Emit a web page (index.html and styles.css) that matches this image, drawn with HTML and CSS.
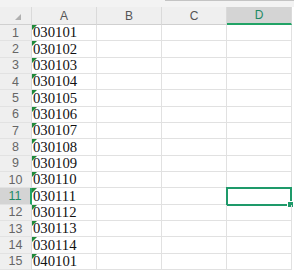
FILE: index.html
```html
<!DOCTYPE html>
<html lang="en">
<head>
  <meta charset="UTF-8">
  <title>Sheet</title>
  <link rel="stylesheet" href="styles.css">
</head>
<body>
  <div class="formula-edge"><span class="edge-line"></span></div>
  <div class="sheet" id="sheet">
    <div class="corner"><span class="corner-tri"></span></div>
    <div class="col-head">A</div>
    <div class="col-head">B</div>
    <div class="col-head">C</div>
    <div class="col-head active">D</div>
  </div>

  <script>
    const sheet = document.getElementById('sheet');
    const codes = ['030101', '030102', '030103', '030104', '030105', '030106', '030107',
      '030108', '030109', '030110', '030111', '030112', '030113', '030114', '040101'];

    codes.forEach((code, i) => {
      const row = i + 1;
      const sel = row === 11;
      let html = `<div class="row-head${sel ? ' active' : ''}">${row}</div>`;
      html += `<div class="cell text"><span class="flag"></span>${code}</div>`;
      html += '<div class="cell"></div><div class="cell"></div>';
      html += `<div class="cell${sel ? ' selected' : ''}"></div>`;
      sheet.insertAdjacentHTML('beforeend', html);
    });
  </script>
</body>
</html>
```

FILE: styles.css
```css
body {
  margin: 0;
  background: #fff;
  overflow: hidden;
  font-family: "Liberation Sans", Arial, sans-serif;
}

.formula-edge {
  height: 7px;
  background: #f3f3f3;
  position: relative;
}

.edge-line {
  position: absolute;
  left: 165px;
  right: 0;
  top: 0;
  height: 1px;
  background: #c4c4c4;
}

.sheet {
  display: grid;
  grid-template-columns: 32px 65px 65px 65px 65px;
  grid-template-rows: 18px repeat(15, 16.33px);
}

.corner, .col-head, .row-head {
  background: #efefef;
  color: #555;
  box-sizing: border-box;
  border-right: 1px solid #dadada;
  border-bottom: 1px solid #d0d0d0;
  display: flex;
  align-items: center;
  justify-content: center;
}

.corner {
  position: relative;
}

.corner-tri {
  position: absolute;
  right: 10px;
  bottom: 4px;
  width: 0;
  height: 0;
  border-left: 6px solid transparent;
  border-bottom: 6px solid #b0b0b0;
}

.col-head {
  font-size: 12px;
  color: #555;
}

.col-head.active {
  background: #d4d4d4;
  color: #1f8a64;
  border-bottom: 2px solid #21a366;
}

.row-head {
  font-size: 12.5px;
  color: #666;
  border-bottom-color: #e2e2e2;
}

.row-head.active {
  background: #d4d4d4;
  color: #1f8a64;
  border-right: 2px solid #21a366;
}

.cell {
  box-sizing: border-box;
  border-right: 1px solid #e1e1e1;
  border-bottom: 1px solid #e1e1e1;
  position: relative;
}

.cell.text {
  font-family: "Liberation Serif", "Times New Roman", serif;
  font-size: 14.7px;
  color: #111;
  line-height: 16px;
  padding-left: 1px;
  display: flex;
  align-items: flex-end;
}

.flag {
  position: absolute;
  left: 0;
  top: 0;
  width: 0;
  height: 0;
  border-top: 5px solid #1e8a3a;
  border-right: 5px solid transparent;
}

.cell.selected {
  border: 2px solid #1e9a6a;
  margin: -1px 0 -1px -1px;
  position: relative;
}

.cell.selected::after {
  content: "";
  position: absolute;
  right: -4px;
  bottom: -4px;
  width: 5px;
  height: 5px;
  background: #1e9a6a;
  border: 1px solid #fff;
}
```
